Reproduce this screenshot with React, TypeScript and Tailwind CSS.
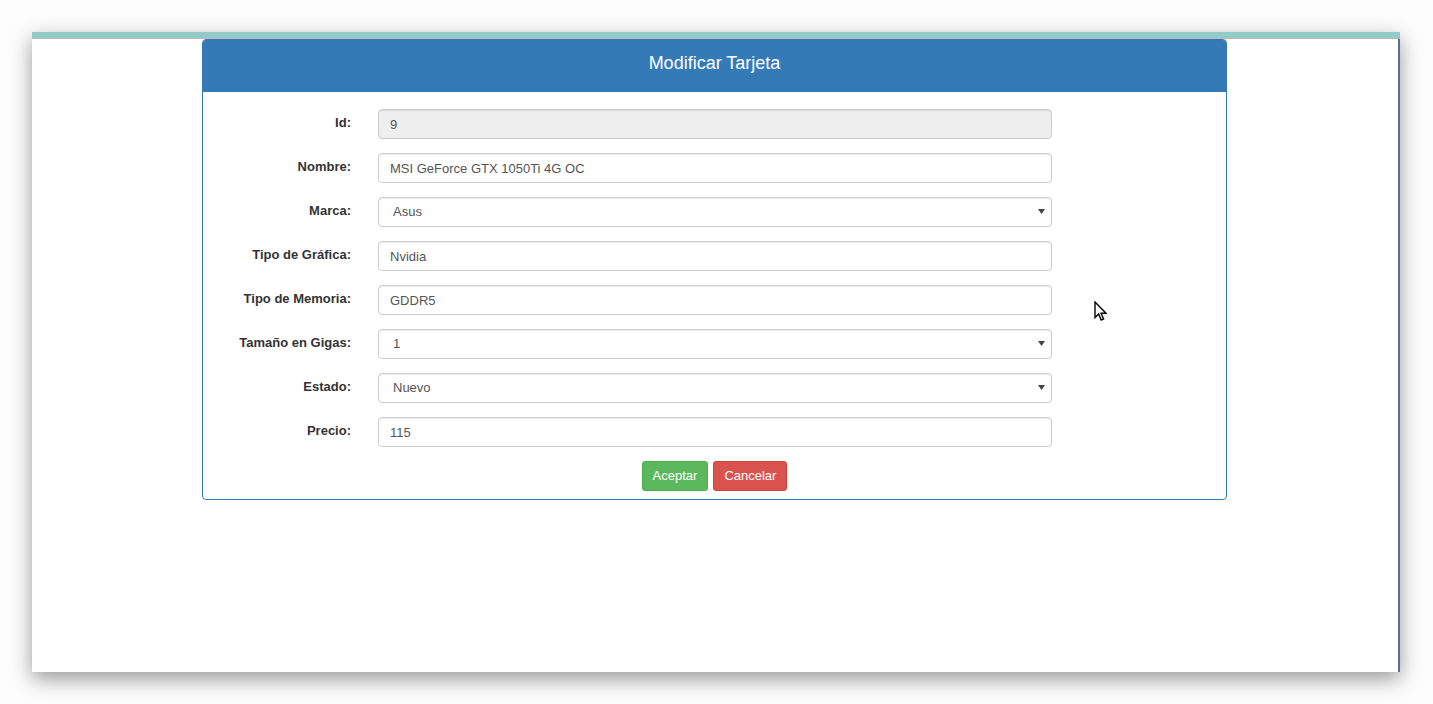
import { useState } from "react";

const FONT = "font-['Liberation_Sans',Arial,sans-serif]";

interface FieldProps {
  label: string;
  children: React.ReactNode;
}

function Field({ label, children }: FieldProps) {
  return (
    <div className="flex items-center gap-[27px]">
      <label className="w-[148px] text-right text-[13px] font-bold text-[#333] leading-[30px] -mt-[3px]">
        {label}
      </label>
      <div className="w-[674px]">{children}</div>
    </div>
  );
}

// background is left out here so disabled fields can set their own
const baseInput =
  "block w-full h-[30px] px-[11px] text-[13px] text-[#555] border border-[#ccc] rounded-[4px] shadow-[inset_0_1px_1px_rgba(0,0,0,0.075)] outline-none";
const inputCls = `${baseInput} bg-white`;

function Select({ value, options, onChange }: { value: string; options: string[]; onChange: (v: string) => void }) {
  return (
    <div className="relative">
      <select
        value={value}
        onChange={(e) => onChange(e.target.value)}
        className={`${inputCls} appearance-none pl-[14px]`}
      >
        {options.map((o) => (
          <option key={o} value={o}>
            {o}
          </option>
        ))}
      </select>
      <svg className="absolute right-[7px] top-[12px] pointer-events-none" width="7" height="5" viewBox="0 0 7 5">
        <path d="M0 0 L7 0 L3.5 5 Z" fill="#444" />
      </svg>
    </div>
  );
}

export default function App() {
  const [nombre, setNombre] = useState("MSI GeForce GTX 1050Ti 4G OC");
  const [marca, setMarca] = useState("Asus");
  const [tipo, setTipo] = useState("Nvidia");
  const [memoria, setMemoria] = useState("GDDR5");
  const [gigas, setGigas] = useState("1");
  const [estado, setEstado] = useState("Nuevo");
  const [precio, setPrecio] = useState("115");

  return (
    <div className={`relative min-h-screen w-full bg-[#fdfdfd] pt-[32px] pl-[32px] ${FONT}`}>
      {/* window */}
      <div className="flex h-[640px] w-[1368px] flex-col shadow-[0_7px_20px_rgba(0,0,0,0.4)]">
        <div className="h-[6px] bg-[#93cbc9]" />
        <div className="h-px bg-[#b9b9c0]" />
        <div className="flex-1 bg-white border-r-2 border-[#5d6d90]">
          {/* panel */}
          <div className="ml-[170px] w-[1025px] rounded-[4px] border border-[#337ab7] bg-white">
            <div className="flex h-[52px] items-center justify-center rounded-t-[3px] bg-[#337ab7] pb-[5px]">
              <h3 className="text-[18px] text-white">Modificar Tarjeta</h3>
            </div>
            <form className="flex flex-col gap-[14px] pt-[17px] pb-[8px]">
              <Field label="Id:">
                <input className={`${baseInput} bg-[#eee]`} value="9" disabled readOnly />
              </Field>
              <Field label="Nombre:">
                <input className={inputCls} value={nombre} onChange={(e) => setNombre(e.target.value)} />
              </Field>
              <Field label="Marca:">
                <Select value={marca} options={["Asus", "MSI", "Gigabyte", "EVGA", "Zotac"]} onChange={setMarca} />
              </Field>
              <Field label="Tipo de Gráfica:">
                <input className={inputCls} value={tipo} onChange={(e) => setTipo(e.target.value)} />
              </Field>
              <Field label="Tipo de Memoria:">
                <input className={inputCls} value={memoria} onChange={(e) => setMemoria(e.target.value)} />
              </Field>
              <Field label="Tamaño en Gigas:">
                <Select value={gigas} options={["1", "2", "3", "4", "6", "8"]} onChange={setGigas} />
              </Field>
              <Field label="Estado:">
                <Select value={estado} options={["Nuevo", "Usado"]} onChange={setEstado} />
              </Field>
              <Field label="Precio:">
                <input className={inputCls} value={precio} onChange={(e) => setPrecio(e.target.value)} />
              </Field>
              <div className="flex justify-center gap-[5px]">
                <button
                  type="button"
                  className="h-[30px] rounded-[3px] border border-[#4cae4c] bg-[#5cb85c] px-[10px] text-[13px] text-white"
                >
                  Aceptar
                </button>
                <button
                  type="button"
                  className="h-[30px] rounded-[3px] border border-[#d43f3a] bg-[#d9534f] px-[10px] text-[13px] text-white"
                >
                  Cancelar
                </button>
              </div>
            </form>
          </div>
        </div>
      </div>

      {/* mouse pointer */}
      <svg className="absolute left-[1094px] top-[301px]" width="13" height="21" viewBox="0 0 13 21">
        <path
          d="M1 1 L1 16.5 L4.6 13 L7.2 19 L9.6 18 L7 12.2 L12 12.2 Z"
          fill="#fff"
          stroke="#000"
          strokeWidth="1.4"
          strokeLinejoin="miter"
        />
      </svg>
    </div>
  );
}
